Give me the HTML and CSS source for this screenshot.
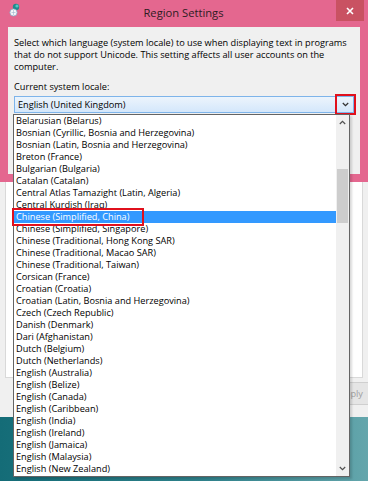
FILE: index.html
```html
<!DOCTYPE html>
<html lang="en">
<head>
<meta charset="utf-8">
<title>Region Settings</title>
<link rel="stylesheet" href="styles.css">
</head>
<body>
<div class="screen">
    <div class="dialog">
        <div class="titlebar">
            <svg class="appicon" width="12" height="14" viewBox="0 0 12 14">
                <circle cx="7" cy="4" r="3.2" fill="#1f8a8c"/>
                <circle cx="8" cy="3" r="1.6" fill="#55c7c4"/>
                <circle cx="4.5" cy="9.5" r="3.6" fill="#f4f6f8" stroke="#8aa9c6" stroke-width="0.8"/>
                <path d="M2.5 9.5h4M4.5 7v5" stroke="#9db6cf" stroke-width="0.6"/>
            </svg>
            <span class="title">Region Settings</span>
            <span class="close">
                <svg width="8" height="8" viewBox="0 0 8 8"><path d="M1 1L7 7M7 1L1 7" stroke="#fff" stroke-width="1.6"/></svg>
            </span>
        </div>
        <div class="client">
            <p class="intro">Select which language (system locale) to use when displaying text in programs<br>that do not support Unicode. This setting affects all user accounts on the<br>computer.</p>
            <div class="label">Current system locale:</div>
            <div class="combo">
                <span class="combo-text">English (United Kingdom)</span>
                <!-- red mark is drawn as the outline of the arrow button -->
                <span class="combo-btn">
                    <svg width="7" height="5" viewBox="0 0 7 5"><path d="M0.8 1L3.5 3.7L6.2 1" fill="none" stroke="#333" stroke-width="1.3"/></svg>
                </span>
            </div>
        </div>
    </div>

    <!-- window behind the dialog -->
    <div class="backwin">
        <div class="tabpage"></div>
        <div class="buttons">
            <span class="btn">Apply</span>
        </div>
    </div>
    <div class="desktop"></div>

    <!-- open drop-down list of the combo -->
    <div class="droplist">
        <ul class="items">
            <li>Belarusian (Belarus)</li>
            <li>Bosnian (Cyrillic, Bosnia and Herzegovina)</li>
            <li>Bosnian (Latin, Bosnia and Herzegovina)</li>
            <li>Breton (France)</li>
            <li>Bulgarian (Bulgaria)</li>
            <li>Catalan (Catalan)</li>
            <li>Central Atlas Tamazight (Latin, Algeria)</li>
            <li>Central Kurdish (Iraq)</li>
            <li class="selected">Chinese (Simplified, China)</li>
            <li>Chinese (Simplified, Singapore)</li>
            <li>Chinese (Traditional, Hong Kong SAR)</li>
            <li>Chinese (Traditional, Macao SAR)</li>
            <li>Chinese (Traditional, Taiwan)</li>
            <li>Corsican (France)</li>
            <li>Croatian (Croatia)</li>
            <li>Croatian (Latin, Bosnia and Herzegovina)</li>
            <li>Czech (Czech Republic)</li>
            <li>Danish (Denmark)</li>
            <li>Dari (Afghanistan)</li>
            <li>Dutch (Belgium)</li>
            <li>Dutch (Netherlands)</li>
            <li>English (Australia)</li>
            <li>English (Belize)</li>
            <li>English (Canada)</li>
            <li>English (Caribbean)</li>
            <li>English (India)</li>
            <li>English (Ireland)</li>
            <li>English (Jamaica)</li>
            <li>English (Malaysia)</li>
            <li>English (New Zealand)</li>
        </ul>
        <div class="scrollbar">
            <span class="sb-btn">
                <svg width="7" height="5" viewBox="0 0 7 5"><path d="M0.8 4L3.5 1.3L6.2 4" fill="none" stroke="#505050" stroke-width="1.2"/></svg>
            </span>
            <span class="sb-thumb"></span>
            <span class="sb-btn sb-down">
                <svg width="7" height="5" viewBox="0 0 7 5"><path d="M0.8 1L3.5 3.7L6.2 1" fill="none" stroke="#505050" stroke-width="1.2"/></svg>
            </span>
        </div>
    </div>

    <!-- red mark round the chosen locale -->
    <div class="mark-item"></div>
</div>
</body>
</html>
```

FILE: styles.css
```css
body {
    margin: 0;
    font-family: "Open Sans", "Noto Sans", sans-serif;
    font-size: 9.2px;
    color: #000;
}
.screen {
    position: relative;
    width: 368px;
    height: 481px;
    overflow: hidden;
    display: flex;
    flex-direction: column;
    background: linear-gradient(90deg, #146c77, #2f828c 55%, #64a6ac);
}

/* dialog */
.dialog {
    background-color: #e4678f;
    padding: 0 8px 8px;
}
.titlebar {
    height: 27px;
    display: flex;
    align-items: flex-start;
    margin: 0 -4px 0 1px;
}
.appicon {
    margin-top: 3px;
}
.title {
    flex: 1;
    text-align: center;
    font-size: 11.2px;
    line-height: 26px;
    color: #2e1c23;
    padding-left: 10px;
}
.close {
    width: 28px;
    height: 21px;
    background-color: #c95262;
    display: flex;
    align-items: center;
    justify-content: center;
}
.client {
    background-color: #f0f0f0;
    height: 147px;
    padding: 10px 6px 0;
    box-sizing: border-box;
}
.intro {
    margin: 0;
    line-height: 12px;
    white-space: nowrap;
}
.label {
    margin-top: 8px;
    line-height: 12px;
}
.combo {
    margin-top: 3px;
    height: 17px;
    border: 1px solid #7eb4ea;
    background: linear-gradient(#ecf4fc, #d4e7fb);
    box-sizing: border-box;
    display: flex;
    align-items: center;
}
.combo-text {
    flex: 1;
    padding-left: 3px;
}
.combo-btn {
    width: 15px;
    height: 15px;
    display: flex;
    align-items: center;
    justify-content: center;
    outline: 2px solid #e0101c;
    outline-offset: 1px;
}

/* window behind */
.backwin {
    background-color: #f0f0f0;
    padding: 0 5px;
}
.tabpage {
    height: 195px;
    background-color: #fff;
    border: 1px solid #d9d9d9;
    border-top: 0;
}
.buttons {
    height: 39px;
    display: flex;
    justify-content: flex-end;
    align-items: flex-start;
    margin-right: -13px;
}
.btn {
    margin-top: 4px;
    width: 48px;
    height: 21px;
    line-height: 21px;
    text-align: center;
    background-color: #e5e5e5;
    border: 1px solid #cfcfcf;
    color: #a0a0a0;
}
.desktop {
    flex: 1;
}

/* drop-down list */
.droplist {
    position: absolute;
    left: 13px;
    top: 114px;
    width: 337px;
    height: 363px;
    box-sizing: border-box;
    border: 1px solid #646464;
    background-color: #fff;
    display: flex;
    box-shadow: 2px 2px 2px rgba(0, 0, 0, 0.15);
}
.items {
    flex: 1;
    margin: 0;
    padding: 0;
    list-style: none;
}
.items li {
    height: 12px;
    line-height: 12px;
    padding-left: 2px;
    white-space: nowrap;
}
.items li.selected {
    background-color: #3399ff;
    color: #fff;
}
.scrollbar {
    width: 13px;
    background-color: #f0f0f0;
    display: flex;
    flex-direction: column;
    align-items: center;
}
.sb-btn {
    height: 15px;
    display: flex;
    align-items: center;
    justify-content: center;
}
.sb-thumb {
    margin-top: 39px;
    width: 11px;
    height: 54px;
    background-color: #cdcdcd;
}
.sb-down {
    margin-top: auto;
}

/* red mark */
.mark-item {
    position: absolute;
    left: 12px;
    top: 208px;
    width: 132px;
    height: 18px;
    border: 2px solid #e0101c;
    box-sizing: border-box;
}
```
